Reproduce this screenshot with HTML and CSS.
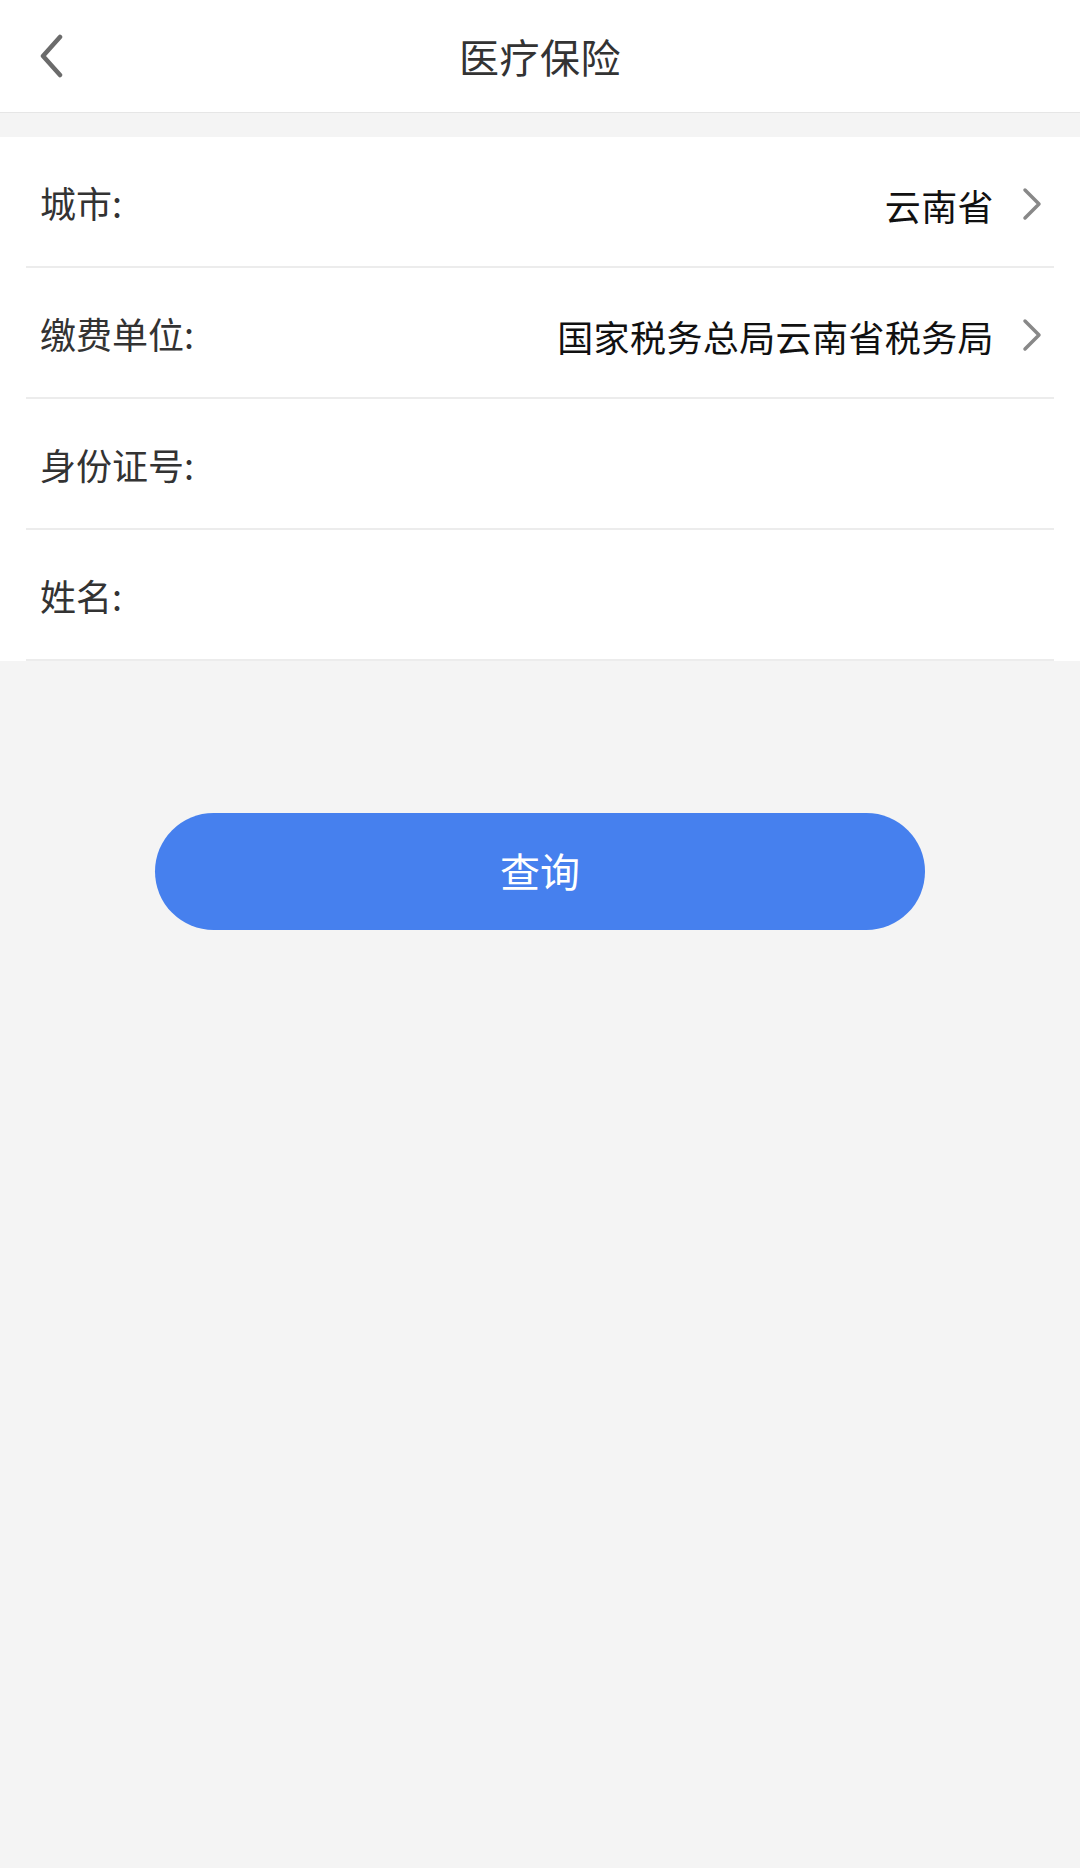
FILE: index.html
```html
<!DOCTYPE html>
<html lang="zh-CN">
<head>
    <meta charset="UTF-8">
    <meta name="viewport" content="width=device-width, initial-scale=1.0">
    <title>医疗保险</title>
    <link rel="stylesheet" href="styles.css">
</head>
<body>
    <div class="header">
        <a class="back-btn" href="#">
            <svg width="26" height="44" viewBox="0 0 26 44">
                <polyline points="22,3 5,22 22,41" fill="none" stroke="#6b6b6b" stroke-width="4.5" stroke-linecap="round" stroke-linejoin="round"/>
            </svg>
        </a>
        <h1 class="header-title">医疗保险</h1>
        <span></span>
    </div>

    <div class="form-list">
        <div class="form-row">
            <span class="row-label">城市:</span>
            <span class="row-value">云南省</span>
            <svg class="row-arrow" width="20" height="34" viewBox="0 0 20 34">
                <polyline points="3,3 17,17 3,31" fill="none" stroke="#888" stroke-width="3.5" stroke-linecap="round" stroke-linejoin="round"/>
            </svg>
        </div>
        <div class="form-row">
            <span class="row-label">缴费单位:</span>
            <span class="row-value">国家税务总局云南省税务局</span>
            <svg class="row-arrow" width="20" height="34" viewBox="0 0 20 34">
                <polyline points="3,3 17,17 3,31" fill="none" stroke="#888" stroke-width="3.5" stroke-linecap="round" stroke-linejoin="round"/>
            </svg>
        </div>
        <div class="form-row">
            <span class="row-label">身份证号:</span>
            <input class="row-input" type="text">
        </div>
        <div class="form-row">
            <span class="row-label">姓名:</span>
            <input class="row-input" type="text">
        </div>
    </div>

    <div class="actions">
        <button class="query-btn" type="button">查询</button>
    </div>
</body>
</html>
```

FILE: styles.css
```css
body {
    margin: 0;
    padding: 0;
    background-color: #f4f4f4;
    font-family: "Noto Sans CJK SC", "Noto Sans", sans-serif;
    color: #333;
}
.header {
    height: 112px;
    background-color: #fff;
    border-bottom: 1px solid #e6e6e6;
    display: grid;
    grid-template-columns: 1fr auto 1fr;
    align-items: center;
}
.back-btn {
    display: flex;
    align-items: center;
    padding-left: 38px;
}
.header-title {
    margin: 0;
    font-size: 40px;
    font-weight: normal;
    color: #333;
    letter-spacing: 0.5px;
}
.form-list {
    margin-top: 24px;
    background-color: #fff;
    padding: 0 26px;
}
.form-row {
    height: 129px;
    border-bottom: 2px solid #ececec;
    display: flex;
    align-items: center;
    padding: 0 12px 0 14px;
    font-size: 36px;
}
.row-label {
    color: #333;
    white-space: nowrap;
}
.row-value {
    margin-left: auto;
    color: #111;
    padding-top: 6px;
    letter-spacing: 0.4px;
}
.row-arrow {
    margin-left: 28px;
    margin-top: 4px;
}
.row-input {
    flex: 1;
    border: none;
    outline: none;
    font-size: 36px;
    background: transparent;
}
.actions {
    display: flex;
    justify-content: center;
    padding-top: 152px;
}
.query-btn {
    width: 770px;
    height: 117px;
    border: none;
    border-radius: 59px;
    background-color: #4680ee;
    color: #fff;
    font-family: "Noto Sans CJK SC", "Noto Sans", sans-serif;
    font-size: 40px;
    padding-bottom: 4px;
    cursor: pointer;
}
```
